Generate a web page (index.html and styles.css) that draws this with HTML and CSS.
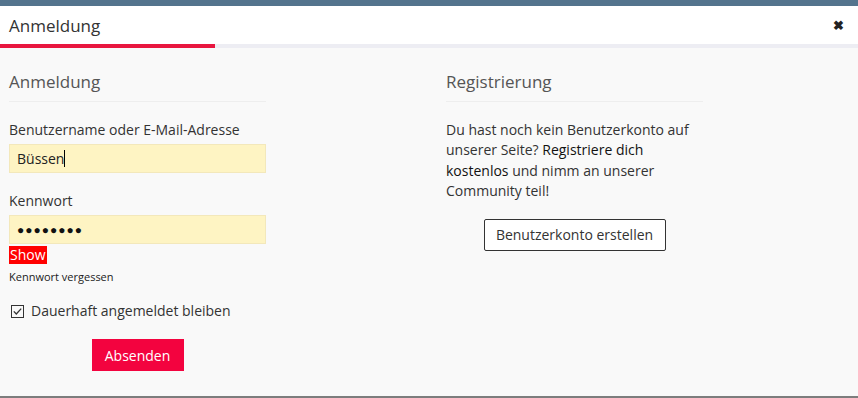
FILE: index.html
```html
<!DOCTYPE html>
<html lang="de">

<head>
    <meta charset="UTF-8">
    <meta name="viewport" content="width=device-width, initial-scale=1.0">
    <title>Anmeldung</title>
    <link rel="stylesheet" href="styles.css">
</head>

<body>
    <div class="backdrop-top"></div>

    <div class="modal">
        <div class="modal-header">
            <h2>Anmeldung</h2>
            <span class="close">&#10006;</span>
        </div>
        <div class="progress">
            <div class="progress-bar"></div>
        </div>

        <div class="modal-body">
            <div class="column">
                <h3>Anmeldung</h3>
                <form class="login-form">
                    <label for="user">Benutzername oder E-Mail-Adresse</label>
                    <div class="field">
                        <input id="user" type="text" value="Büssen"><span class="caret"></span>
                    </div>

                    <label for="pass">Kennwort</label>
                    <div class="field">
                        <input id="pass" type="text" class="dots" value="●●●●●●●●">
                    </div>
                    <span class="show">Show</span>
                    <a class="forgot" href="#">Kennwort vergessen</a>

                    <div class="remember">
                        <span class="box">
                            <svg width="13" height="13" viewBox="0 0 13 13">
                                <rect x="0.5" y="0.5" width="12" height="12" fill="none" stroke="#333" />
                                <path d="M2.8 6.4 L5.3 9 L10.2 3.6" fill="none" stroke="#333" stroke-width="1.3" />
                            </svg>
                        </span>
                        <span>Dauerhaft angemeldet bleiben</span>
                    </div>

                    <div class="submit-row">
                        <button type="button" class="btn-primary">Absenden</button>
                    </div>
                </form>
            </div>

            <div class="column">
                <h3>Registrierung</h3>
                <p>Du hast noch kein Benutzerkonto auf unserer Seite? <strong>Registriere dich kostenlos</strong> und nimm an unserer Community teil!</p>
                <div class="register-row">
                    <button type="button" class="btn-outline">Benutzerkonto erstellen</button>
                </div>
            </div>
        </div>
    </div>

    <div class="backdrop-bottom"></div>
</body>

</html>
```

FILE: styles.css
```css
body {
    margin: 0;
    width: 858px;
    height: 398px;
    overflow: hidden;
    background: #f9f9f9;
    font-family: "Open Sans", "Liberation Sans", sans-serif;
    font-size: 14px;
    color: #333;
}

.backdrop-top {
    height: 6px;
    background: #54748d;
}

.backdrop-bottom {
    height: 2px;
    background: #7d7d7d;
}

.modal {
    height: 390px;
    background: #f9f9f9;
    display: flex;
    flex-direction: column;
}

.modal-header {
    height: 38px;
    background: #fff;
    display: flex;
    align-items: center;
    justify-content: space-between;
    padding: 0 14px 0 9px;
}

.modal-header h2 {
    margin: 0;
    font-size: 17px;
    font-weight: 400;
    color: #333;
}

.close {
    font-size: 13px;
    font-weight: bold;
    color: #222;
}

.progress {
    height: 4px;
    background: #ededf3;
}

.progress-bar {
    width: 215px;
    height: 100%;
    background: #e8163f;
}

.modal-body {
    flex: 1;
    display: grid;
    grid-template-columns: 437px 257px;
    padding: 22px 9px 0;
}

.column {
    width: 257px;
}

.column h3 {
    margin: 0;
    padding-bottom: 8px;
    border-bottom: 1px solid #eeeeee;
    font-size: 17px;
    font-weight: 400;
    color: #555;
}

.login-form {
    display: flex;
    flex-direction: column;
}

label {
    margin-top: 18px;
    line-height: 20px;
}

.field {
    position: relative;
    margin-top: 4px;
}

input {
    width: 100%;
    height: 29px;
    box-sizing: border-box;
    padding: 0 7px;
    border: 1px solid #f3e8bb;
    background: #fef4c3;
    font-family: inherit;
    font-size: 14px;
    color: #222;
    outline: none;
}

input.dots {
    font-size: 12px;
    letter-spacing: 1px;
    color: #111;
}

.caret {
    position: absolute;
    left: 55px;
    top: 6px;
    width: 1px;
    height: 17px;
    background: #000;
}

.show {
    align-self: flex-start;
    margin-top: 2px;
    padding: 0 1px;
    background: #ff0000;
    color: #fff;
    line-height: 18px;
}

.forgot {
    margin-top: 5px;
    font-size: 11px;
    color: #222;
    text-decoration: none;
}

.remember {
    display: flex;
    align-items: center;
    gap: 7px;
    margin-top: 17px;
    padding-left: 2px;
    line-height: 20px;
}

.box {
    display: flex;
}

.submit-row {
    display: flex;
    justify-content: center;
    margin-top: 18px;
}

.btn-primary {
    width: 92px;
    height: 32px;
    border: none;
    background: #f3033f;
    color: #fff;
    font-family: inherit;
    font-size: 14px;
}

p {
    margin: 18px 0 0;
    line-height: 20.4px;
    color: #333;
}

strong {
    font-weight: 400;
    color: #111;
}

.register-row {
    display: flex;
    justify-content: center;
    margin-top: 17px;
}

.btn-outline {
    width: 182px;
    height: 32px;
    border: 1px solid #333;
    border-radius: 2px;
    background: #fff;
    color: #333;
    font-family: inherit;
    font-size: 14px;
}
```
